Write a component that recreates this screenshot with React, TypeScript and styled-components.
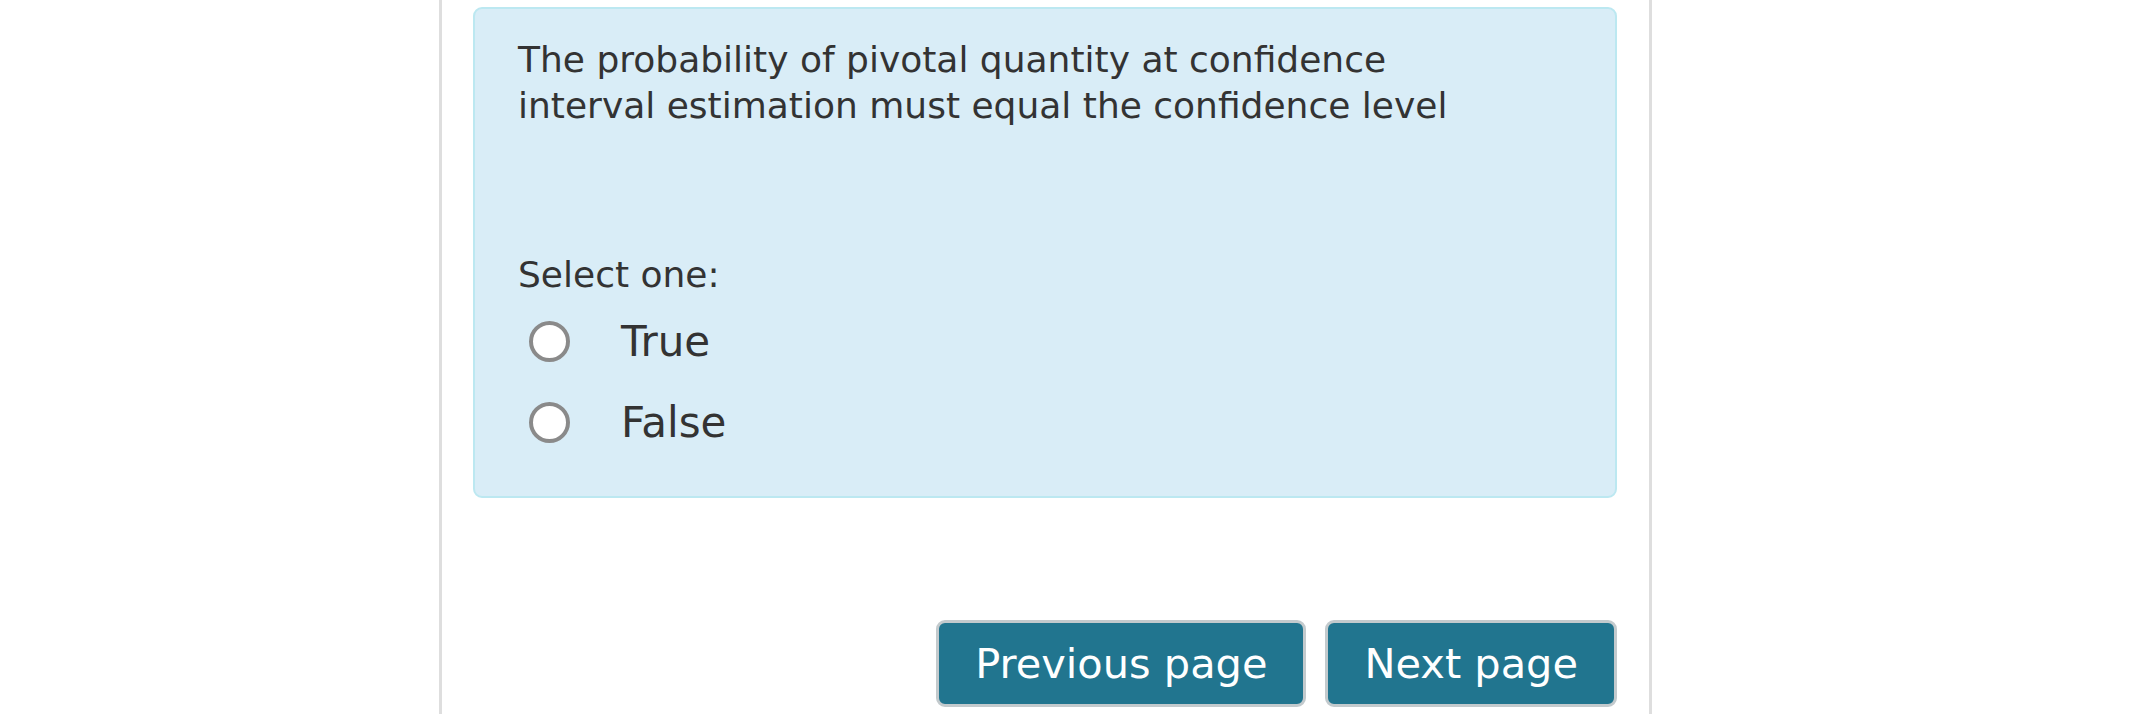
import React from "react";
import styled, { createGlobalStyle } from "styled-components";

const GlobalStyle = createGlobalStyle`
  html, body {
    margin: 0;
    padding: 0;
    background: #ffffff;
  }
  body {
    font-family: "DejaVu Sans", Verdana, sans-serif;
    color: #333333;
  }
`;

const Page = styled.div`
  display: flex;
  height: 714px;
  overflow: hidden;
`;

const Column = styled.main`
  margin-left: 439px;
  width: 1213px;
  border-left: 3px solid #dedede;
  border-right: 3px solid #dedede;
  padding: 7px 32px 0 31px;
  box-sizing: border-box;
  flex-shrink: 0;
`;

const QuestionCard = styled.section`
  background: #d9edf7;
  border: 2px solid #bce8f1;
  border-radius: 9px;
  padding: 28px 40px 33px 43px;
`;

const QuestionText = styled.p`
  margin: 0;
  font-size: 36px;
  line-height: 46px;
  max-width: 980px;
`;

const Prompt = styled.div`
  margin-top: 123px;
  font-size: 36px;
  line-height: 46px;
`;

const Answers = styled.div`
  display: flex;
  flex-direction: column;
  margin-top: 3px;
`;

const Option = styled.label`
  display: flex;
  align-items: center;
  height: 81px;
  padding-left: 11px;
  gap: 51px;
  font-size: 42px;
  cursor: pointer;
`;

const Radio = styled.input.attrs({ type: "radio" })`
  appearance: none;
  margin: 0;
  width: 41px;
  height: 41px;
  border-radius: 50%;
  border: 4px solid #8a8a8a;
  background: #ffffff;
  box-sizing: border-box;
  flex-shrink: 0;
`;

const Nav = styled.nav`
  display: flex;
  justify-content: flex-end;
  gap: 19px;
  margin-top: 122px;
`;

const PageButton = styled.button`
  font-family: "DejaVu Sans", Verdana, sans-serif;
  font-size: 41.5px;
  line-height: 1;
  color: #ffffff;
  background: #21758f;
  border: 3px solid #c3cacd;
  border-radius: 9px;
  height: 87px;
  padding: 0 36px;
  cursor: pointer;
`;

export default function App() {
  return (
    <>
      <GlobalStyle />
      <Page>
        <Column>
          <QuestionCard>
            <QuestionText>
              The probability of pivotal quantity at confidence interval
              estimation must equal the confidence level
            </QuestionText>
            <Prompt>Select one:</Prompt>
            <Answers>
              <Option>
                <Radio name="answer" value="1" />
                True
              </Option>
              <Option>
                <Radio name="answer" value="0" />
                False
              </Option>
            </Answers>
          </QuestionCard>
          <Nav>
            <PageButton>Previous page</PageButton>
            <PageButton>Next page</PageButton>
          </Nav>
        </Column>
      </Page>
    </>
  );
}
